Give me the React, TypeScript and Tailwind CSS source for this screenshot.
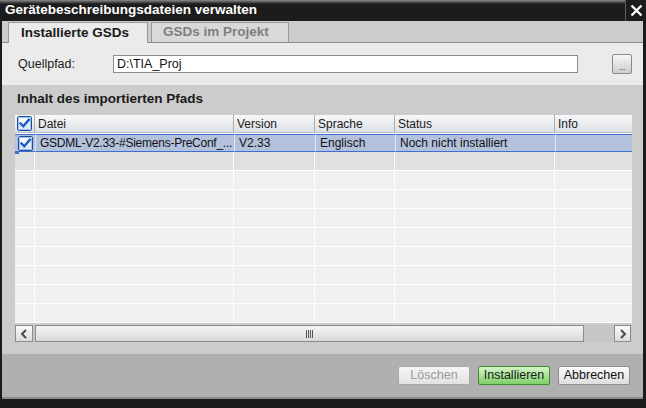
import React from 'react';

const font = { fontFamily: '"Liberation Sans", Arial, sans-serif' };

type Col = { key: string; label: string; w: string };

const cols: Col[] = [
  { key: 'datei', label: 'Datei', w: 'w-[199px]' },
  { key: 'version', label: 'Version', w: 'w-[81px]' },
  { key: 'sprache', label: 'Sprache', w: 'w-[80px]' },
  { key: 'status', label: 'Status', w: 'w-[160px]' },
  { key: 'info', label: 'Info', w: 'w-[77px]' },
];

const row = {
  datei: 'GSDML-V2.33-#Siemens-PreConf_...',
  version: 'V2.33',
  sprache: 'Englisch',
  status: 'Noch nicht installiert',
  info: '',
};

function Check() {
  return (
    <svg width="15" height="15" viewBox="0 0 15 15">
      <defs>
        <linearGradient id="cbg" x1="0" y1="0" x2="0" y2="1">
          <stop offset="0" stopColor="#ffffff" />
          <stop offset="1" stopColor="#d6e4f5" />
        </linearGradient>
      </defs>
      <rect x="0.5" y="0.5" width="14" height="14" rx="1.5" fill="url(#cbg)" stroke="#1d4f9c" />
      <rect x="1.5" y="1.5" width="12" height="12" rx="1" fill="none" stroke="#9fc0ea" />
      <path d="M3.5 7.5 L6.3 10.3 L11.8 3.8" fill="none" stroke="#1f5cc4" strokeWidth="2.4" strokeLinecap="square" />
    </svg>
  );
}

function Chevron({ dir }: { dir: 'left' | 'right' }) {
  return (
    <svg width="8" height="10" viewBox="0 0 8 10">
      <path
        d={dir === 'left' ? 'M6 1 L2 5 L6 9' : 'M2 1 L6 5 L2 9'}
        fill="none"
        stroke="#4a4a4a"
        strokeWidth="2"
      />
    </svg>
  );
}

function Btn({ label, kind }: { label: string; kind: 'disabled' | 'primary' | 'normal' }) {
  const cls =
    kind === 'primary'
      ? 'bg-gradient-to-b from-[#d4f5c8] to-[#7fcf68] border-[#3f8d2f] text-[#1a1a1a]'
      : kind === 'disabled'
        ? 'bg-gradient-to-b from-[#f6f6f6] to-[#e2e2e2] border-[#a9a9a9] text-[#9a9a9a]'
        : 'bg-gradient-to-b from-[#fbfbfb] to-[#dedede] border-[#8f8f8f] text-[#111]';
  return (
    <div className={`w-[72px] h-[19px] border rounded-[2px] flex items-center justify-center text-[12.5px] ${cls}`}>
      {label}
    </div>
  );
}

export default function App() {
  const emptyRows = Array.from({ length: 9 }, (_, i) => i);
  return (
    <div className="w-[646px] h-[408px] flex flex-col bg-[#1b1b1b] overflow-hidden" style={font}>
      {/* title bar */}
      <div className="h-[21px] flex bg-[linear-gradient(#8a8a8a,#1c1c1c_4px)]">
        <div className="flex-1 pl-[5px] flex items-center text-white font-bold text-[13.5px]">
          Gerätebeschreibungsdateien verwalten
        </div>
        <div className="w-[21px] border-l border-[#5a5a5a] flex items-center justify-center bg-[#1c1c1c]">
          <svg width="13" height="13" viewBox="0 0 13 13">
            <path d="M1.5 1.5 L11.5 11.5 M11.5 1.5 L1.5 11.5" stroke="#ffffff" strokeWidth="2.4" />
          </svg>
        </div>
      </div>

      <div className="flex-1 flex flex-col ml-[2px] mr-[3px]">
        {/* tabs */}
        <div className="h-[22px] bg-[#cccccc] flex items-end pl-[6px] gap-[3px] border-b border-[#8c8c8c]">
          <div className="w-[140px] h-[21px] bg-[#ebebeb] border-l border-r border-t border-[#9a9a9a] -mb-px pl-[12px] flex items-center font-bold text-[13.5px] text-[#1a1a1a]">
            Installierte GSDs
          </div>
          <div className="w-[138px] h-[20px] bg-[#d9d9d9] border border-[#9a9a9a] border-b-0 pl-[11px] flex items-center font-bold text-[13.5px] text-[#7f7f7f]">
            GSDs im Projekt
          </div>
        </div>

        {/* source path */}
        <div className="h-[42px] bg-[#ebebeb] flex items-center pl-[16px] pr-[11px]">
          <div className="w-[95px] text-[12.5px] text-[#1a1a1a]">Quellpfad:</div>
          <div className="w-[465px] h-[18px] bg-white border border-[#8c8c8c] flex items-center pl-[3px] text-[12.5px] text-[#111]">
            D:\TIA_Proj
          </div>
          <div className="flex-1" />
          <div className="w-[20px] h-[20px] border border-[#8a8a8a] rounded-[2px] bg-gradient-to-b from-[#f7f7f7] to-[#cdcdcd] flex items-end justify-center pb-[3px]">
            <span className="text-[9px] leading-[6px] text-[#7a4a4a] tracking-[-0.5px]">...</span>
          </div>
        </div>

        {/* content */}
        <div className="h-[269px] bg-[#cccccc] flex flex-col pl-[13px] pr-[11px]">
          <div className="h-[30px] flex items-center pl-[2px] pb-[2px] font-bold text-[13.5px] text-[#1a1a1a]">
            Inhalt des importierten Pfads
          </div>

          <div className="w-[617px] h-[208px] flex flex-col bg-[#f0f0f0]">
            {/* header */}
            <div className="h-[18px] flex bg-gradient-to-b from-[#f7f8fa] to-[#dde0e5] border-b border-[#b8bcc4]">
              <div className="w-[20px] flex items-center justify-center border-r border-[#a9adb4]">
                <Check />
              </div>
              {cols.map((c) => (
                <div
                  key={c.key}
                  className={`${c.w} border-r border-[#a9adb4] last:border-r-0 pl-[3px] flex items-center text-[12px] text-[#1a1a1a]`}
                >
                  {c.label}
                </div>
              ))}
            </div>

            {/* selected row */}
            <div className="h-[19px] flex border-t border-white bg-[#f0f0f0]">
              <div className="w-[20px] relative flex items-center justify-center bg-[#b3c1dd] border-t border-b border-[#3d6fd1]">
                <Check />
                <div className="absolute left-0 -bottom-[3px] w-[4px] h-[3px] bg-[#3d6fd1]" />
              </div>
              {cols.map((c) => (
                <div
                  key={c.key}
                  className={`${c.w} bg-[#b3c1dd] border-t border-b border-[#3d6fd1] border-l border-l-[#dfe6f2] pl-[4px] flex items-center text-[12px] text-[#111] whitespace-nowrap overflow-hidden ${c.key === 'datei' ? 'tracking-[-0.25px]' : ''}`}
                >
                  {row[c.key as keyof typeof row]}
                </div>
              ))}
            </div>

            {/* empty rows */}
            {emptyRows.map((i) => (
              <div key={i} className={`h-[19px] flex border-b border-white ${i === 0 ? 'bg-[#e0e0e0]' : 'bg-[#f0f0f0]'}`}>
                <div className="w-[20px] border-r border-white" />
                {cols.map((c) => (
                  <div key={c.key} className={`${c.w} border-r border-white last:border-r-0`} />
                ))}
              </div>
            ))}
          </div>

          {/* horizontal scrollbar */}
          <div className="mt-[2px] w-[617px] h-[17px] flex bg-[#c6c6c6]">
            <div className="w-[18px] h-[17px] border border-[#8c8c8c] bg-gradient-to-b from-[#fafafa] to-[#dcdcdc] flex items-center justify-center">
              <Chevron dir="left" />
            </div>
            <div className="ml-[2px] w-[549px] h-[17px] border border-[#8c8c8c] bg-gradient-to-b from-[#f4f4f4] to-[#d9d9d9] flex items-center justify-center">
              <svg width="8" height="8" viewBox="0 0 8 8">
                <path d="M0.5 0 V8 M2.5 0 V8 M4.5 0 V8 M6.5 0 V8" stroke="#555" strokeWidth="1" />
              </svg>
            </div>
            <div className="flex-1" />
            <div className="w-[17px] h-[17px] border border-[#8c8c8c] bg-gradient-to-b from-[#fafafa] to-[#dcdcdc] flex items-center justify-center">
              <Chevron dir="right" />
            </div>
            <div className="w-[1px]" />
          </div>
        </div>

        {/* footer */}
        <div className="flex-1 bg-[#b0b0b0] flex justify-end items-start pt-[12px] pr-[13px] gap-[8px] border-b-2 border-[#8a8a8a]">
          <Btn label="Löschen" kind="disabled" />
          <Btn label="Installieren" kind="primary" />
          <Btn label="Abbrechen" kind="normal" />
        </div>
      </div>
      <div className="h-[9px]" />
    </div>
  );
}
